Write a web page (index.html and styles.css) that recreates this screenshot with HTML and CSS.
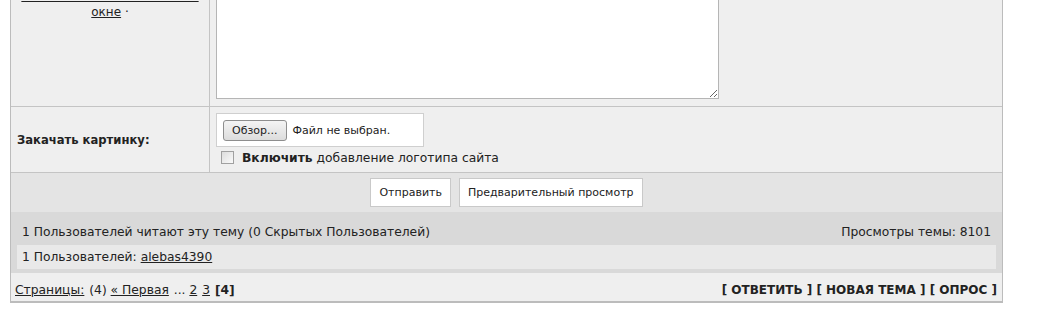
FILE: index.html
```html
<!DOCTYPE html>
<html lang="ru">
<head>
    <meta charset="UTF-8">
    <title>Ответ в тему</title>
    <link rel="stylesheet" href="styles.css">
</head>
<body>
    <div class="board">
        <div class="row row-post">
            <div class="cell-left smilies">
                <a href="#">Показать смайлики в новом окне</a> &middot;
            </div>
            <div class="cell-right">
                <textarea class="post-text"></textarea>
            </div>
        </div>

        <div class="row row-upload">
            <div class="cell-left upload-label">Закачать картинку:</div>
            <div class="cell-right">
                <div class="file-box">
                    <span class="file-btn">Обзор...</span>
                    <span class="file-name">Файл не выбран.</span>
                </div>
                <div class="logo-check">
                    <span class="check"></span><b>Включить</b> добавление логотипа сайта
                </div>
            </div>
        </div>

        <div class="row-buttons">
            <button>Отправить</button>
            <button>Предварительный просмотр</button>
        </div>

        <div class="stats">
            <div class="stats-head">
                <span>1 Пользователей читают эту тему (0 Скрытых Пользователей)</span>
                <span>Просмотры темы: 8101</span>
            </div>
            <div class="stats-users">1 Пользователей: <a href="#">alebas4390</a></div>
        </div>

        <div class="pages">
            <div>
                <a href="#">Страницы:</a> (4) <a href="#">&laquo; Первая</a> ... <a href="#">2</a> <a href="#">3</a> <b>[4]</b>
            </div>
            <div class="actions">[ ОТВЕТИТЬ ] [ НОВАЯ ТЕМА ] [ ОПРОС ]</div>
        </div>
    </div>
</body>
</html>
```

FILE: styles.css
```css
body {
    margin: 0;
    padding: 0 45px 0 10px;
    background-color: #fff;
    font-family: "DejaVu Sans", Verdana, sans-serif;
    font-size: 12.3px;
    color: #222;
}
a {
    color: #222;
}
.board {
    margin-top: -12px;
    border: 1px solid #bcbcbc;
    border-top: none;
    background-color: #efefef;
}
.row {
    display: flex;
    border-bottom: 1px solid #c4c4c4;
}
.cell-left {
    width: 199px;
    border-right: 1px solid #c4c4c4;
    box-sizing: border-box;
}
.cell-right {
    flex: 1;
    padding: 6px;
}
.smilies {
    text-align: center;
    padding: 0 8px;
    line-height: 16px;
    font-size: 12px;
}
.post-text {
    display: block;
    width: 503px;
    height: 111px;
    margin: 0;
    padding: 0;
    border: 1px solid #b5b5b5;
    box-sizing: border-box;
    background-color: #fff;
    resize: both;
}
.row-post .cell-right {
    padding: 0 6px 7px;
}
.row-upload {
    min-height: 65px;
}
.upload-label {
    display: flex;
    align-items: center;
    padding-left: 6px;
    font-weight: bold;
    font-size: 11.6px;
}
.file-box {
    display: flex;
    align-items: center;
    width: 208px;
    height: 34px;
    padding: 0 6px;
    box-sizing: border-box;
    background-color: #fff;
    border: 1px solid #cfcfcf;
    font-size: 11px;
}
.file-btn {
    padding: 3px 8px;
    border: 1px solid #8e8e8e;
    border-radius: 3px;
    background: linear-gradient(#f4f4f4, #dcdcdc);
    margin-right: 6px;
}
.logo-check {
    margin-top: 4px;
    line-height: 14px;
}
.check {
    display: inline-block;
    vertical-align: -2px;
    width: 11px;
    height: 11px;
    margin: 0 8px 0 5px;
    border: 1px solid #a0a0a0;
    background: linear-gradient(135deg, #dcdcdc, #fafafa);
}
.row-buttons {
    display: flex;
    justify-content: center;
    gap: 8px;
    padding: 5px 0;
    background-color: #e4e4e4;
}
button {
    height: 29px;
    padding: 0 8px;
    font-family: "DejaVu Sans", Verdana, sans-serif;
    font-size: 11px;
    color: #222;
    background-color: #fff;
    border: 1px solid #c9c9c9;
}
.stats {
    padding: 11px 6px 4px;
    background-color: #d9d9d9;
}
.stats-head {
    display: flex;
    justify-content: space-between;
    padding: 0 5px 4px;
    line-height: 18px;
}
.stats-users {
    padding: 3px 5px;
    line-height: 18px;
    background-color: #e9e9e9;
}
.pages {
    display: flex;
    justify-content: space-between;
    padding: 8px 5px 2px 4px;
    line-height: 18px;
    border-bottom: 1px solid #bcbcbc;
}
.pages a {
    margin-right: 1px;
}
.actions {
    font-weight: bold;
    font-size: 12px;
}
```
